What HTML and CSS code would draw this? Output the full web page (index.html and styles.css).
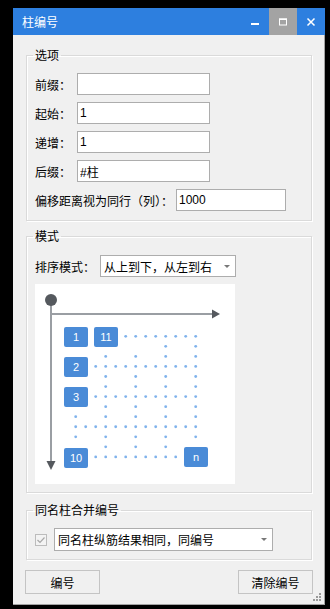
FILE: index.html
```html
<!DOCTYPE html>
<html lang="zh">

<head>
  <meta charset="UTF-8">
  <title>柱编号</title>
  <link rel="stylesheet" href="styles.css">
</head>

<body>
  <div class="window">
    <div class="titlebar">
      <span class="title">柱编号</span>
      <div class="caption-btns">
        <span class="cap-btn">
          <svg width="28" height="27" viewBox="0 0 28 27"><rect x="10" y="15" width="8" height="2" fill="#fff"/></svg>
        </span>
        <span class="cap-btn cap-max">
          <svg width="28" height="27" viewBox="0 0 28 27"><rect x="10.5" y="11" width="7" height="6" fill="none" stroke="#fff" stroke-width="1"/><rect x="10" y="10.5" width="8" height="1.5" fill="#fff"/></svg>
        </span>
        <span class="cap-btn">
          <svg width="28" height="27" viewBox="0 0 28 27"><path d="M10.5 10.5 L17.5 17.5 M17.5 10.5 L10.5 17.5" stroke="#fff" stroke-width="1.5"/></svg>
        </span>
      </div>
    </div>

    <div class="content">
      <fieldset class="group group-options">
        <legend>选项</legend>
        <div class="field">
          <label>前缀：</label>
          <input type="text" class="text-input" value="">
        </div>
        <div class="field">
          <label>起始：</label>
          <input type="text" class="text-input" value="1">
        </div>
        <div class="field">
          <label>递增：</label>
          <input type="text" class="text-input" value="1">
        </div>
        <div class="field">
          <label>后缀：</label>
          <input type="text" class="text-input" value="#柱">
        </div>
        <div class="field field-last">
          <label class="label-wide">偏移距离视为同行（列）：</label>
          <input type="text" class="text-input input-offset" value="1000">
        </div>
      </fieldset>

      <fieldset class="group group-mode">
        <legend>模式</legend>
        <div class="field">
          <label class="label-sort">排序模式：</label>
          <div class="select select-sort">
            <span>从上到下，从左到右</span>
            <span class="arrow"></span>
          </div>
        </div>
        <div class="diagram">
          <svg width="200" height="200" viewBox="0 0 200 200" id="diagramSvg">
            <line x1="16" y1="30" x2="179" y2="30" stroke="#9a9ea3" stroke-width="2"/>
            <polygon points="177,25.5 185,30 177,34.5" fill="#55595e"/>
            <line x1="16" y1="16" x2="16" y2="179" stroke="#9a9ea3" stroke-width="2"/>
            <polygon points="11.5,177 20.5,177 16,186" fill="#55595e"/>
            <circle cx="16" cy="16" r="6" fill="#55595e"/>
            <g id="dots" fill="#80b3ec"></g>
            <g class="cells">
              <rect x="29" y="43" width="24" height="20" rx="2"/>
              <rect x="59" y="43" width="24" height="20" rx="2"/>
              <rect x="29" y="73" width="24" height="20" rx="2"/>
              <rect x="29" y="103" width="24" height="20" rx="2"/>
              <rect x="29" y="164" width="24" height="20" rx="2"/>
              <rect x="149" y="163" width="24" height="20" rx="2"/>
            </g>
            <g class="cell-text">
              <text x="41" y="57">1</text>
              <text x="71" y="57">11</text>
              <text x="41" y="87">2</text>
              <text x="41" y="117">3</text>
              <text x="41" y="178">10</text>
              <text x="161" y="177">n</text>
            </g>
          </svg>
        </div>
      </fieldset>

      <fieldset class="group group-merge">
        <legend>同名柱合并编号</legend>
        <div class="merge-row">
          <span class="checkbox">
            <svg width="10" height="10" viewBox="0 0 10 10"><path d="M1.5 5 L4 7.5 L8.5 2.5" fill="none" stroke="#a8a8a8" stroke-width="1.2"/></svg>
          </span>
          <div class="select select-merge">
            <span>同名柱纵筋结果相同，同编号</span>
            <span class="arrow"></span>
          </div>
        </div>
      </fieldset>

      <div class="buttons">
        <button class="btn">编号</button>
        <button class="btn">清除编号</button>
      </div>
    </div>

    <svg class="grip" width="9" height="9" viewBox="0 0 9 9">
      <rect x="6" y="0" width="2" height="2" fill="#9a9a9a"/>
      <rect x="3" y="3" width="2" height="2" fill="#9a9a9a"/>
      <rect x="6" y="3" width="2" height="2" fill="#9a9a9a"/>
      <rect x="0" y="6" width="2" height="2" fill="#9a9a9a"/>
      <rect x="3" y="6" width="2" height="2" fill="#9a9a9a"/>
      <rect x="6" y="6" width="2" height="2" fill="#9a9a9a"/>
    </svg>
  </div>

  <script>
    // dotted grid behind the numbered cells: [row, list of columns]
    const rows = [
      [0, [5, 6, 7, 8, 9, 10, 11, 12]],
      [1, [9, 12]],
      [2, [3, 6, 9, 12]],
      [3, [2, 3, 4, 5, 6, 7, 8, 9, 10, 11, 12]],
      [4, [3, 6, 9, 12]],
      [5, [3, 6, 9, 12]],
      [6, [2, 3, 4, 5, 6, 7, 8, 9, 10, 11, 12]],
      [7, [3, 6, 9, 12]],
      [8, [0, 3, 6, 9, 12]],
      [9, [0, 1, 2, 3, 4, 5, 6, 7, 8, 9, 10, 11, 12]],
      [10, [0, 3, 6, 9, 12]],
      [11, [3, 6, 9]],
      [12, [2, 3, 4, 5, 6, 7, 8, 9, 10]]
    ];

    const dots = document.getElementById('dots');
    rows.forEach(([r, cols]) => {
      cols.forEach(c => {
        const dot = document.createElementNS('http://www.w3.org/2000/svg', 'circle');
        dot.setAttribute('cx', 40.7 + c * 10);
        dot.setAttribute('cy', 52.3 + r * 10.05);
        dot.setAttribute('r', 1.4);
        dots.appendChild(dot);
      });
    });
  </script>
</body>

</html>
```

FILE: styles.css
```css
body {
  margin: 0;
  background: #000000;
  font-family: "Noto Sans CJK SC", "Liberation Sans", sans-serif;
  font-size: 12px;
  color: #000000;
}

.window {
  position: relative;
  width: 312px;
  height: 597px;
  margin: 8px 0 0 13px;
  box-sizing: border-box;
  background: #f0f0f0;
  border-right: 1px solid #a3a3a3;
  border-bottom: 1px solid #a3a3a3;
}

.titlebar {
  display: flex;
  align-items: center;
  height: 27px;
  background: #2d7fdf;
  margin-right: -1px;
}

.title {
  margin-left: 9px;
  color: #ffffff;
  font-size: 12px;
  line-height: 27px;
}

.caption-btns {
  display: flex;
  margin-left: auto;
}

.cap-btn {
  display: block;
  width: 28px;
  height: 27px;
}

.cap-btn svg {
  display: block;
}

.cap-max {
  background: #a3a3a3;
}

.content {
  padding: 12px 12px 0 13px;
}

.group {
  margin: 0;
  padding: 10px 8px 9px;
  border: 1px solid #dadada;
  box-shadow: inset 1px 1px 0 #ffffff, 1px 1px 0 #ffffff;
  min-width: 0;
}

.group legend {
  margin-left: -2px;
  padding: 0 2px;
  font-size: 12px;
  line-height: 16px;
}

.group-mode {
  margin-top: 7px;
  padding: 11px 8px 8px;
}

.group-merge {
  margin-top: 9px;
  padding: 10px 8px 8px;
}

.field {
  display: flex;
  align-items: center;
  height: 22px;
  margin-bottom: 7px;
}

.field-last {
  margin-bottom: 0;
}

.field label {
  width: 42px;
  flex-shrink: 0;
  white-space: nowrap;
}

.field .label-wide {
  width: 141px;
}

.field .label-sort {
  width: 65px;
}

.text-input {
  width: 133px;
  height: 22px;
  box-sizing: border-box;
  margin: 0;
  padding: 0 2px;
  border: 1px solid #adadad;
  border-radius: 0;
  background: #ffffff;
  font-family: "Liberation Sans", "Noto Sans CJK SC", sans-serif;
  font-size: 12px;
  color: #000000;
  outline: none;
}

.input-offset {
  width: 110px;
}

.select {
  display: flex;
  align-items: center;
  box-sizing: border-box;
  border: 1px solid #adadad;
  background: #ffffff;
  padding-left: 3px;
  white-space: nowrap;
}

.select .arrow {
  margin-left: auto;
  margin-right: 5px;
  width: 0;
  height: 0;
  border-left: 3px solid transparent;
  border-right: 3px solid transparent;
  border-top: 3px solid #787878;
}

.select-sort {
  width: 136px;
  height: 22px;
}

.diagram {
  width: 200px;
  height: 200px;
  margin-top: 7px;
  background: #ffffff;
}

.diagram svg {
  display: block;
}

.cells rect {
  fill: #4a8bd7;
}

.cell-text text {
  fill: #ffffff;
  font-family: "Liberation Sans", sans-serif;
  font-size: 11px;
  text-anchor: middle;
}

.merge-row {
  display: flex;
  align-items: center;
  height: 23px;
}

.checkbox {
  display: flex;
  align-items: center;
  justify-content: center;
  width: 12px;
  height: 12px;
  box-sizing: border-box;
  border: 1px solid #bcbcbc;
  background: #f3f3f3;
}

.select-merge {
  width: 219px;
  height: 23px;
  margin-left: 7px;
}

.buttons {
  display: flex;
  justify-content: space-between;
  margin: 10px -1px 0 -1px;
}

.btn {
  width: 75px;
  height: 24px;
  margin: 0;
  padding: 0;
  border: 1px solid #c4c4c4;
  background: #f0f0f0;
  font-family: "Noto Sans CJK SC", sans-serif;
  font-size: 12px;
  color: #000000;
}

.grip {
  position: absolute;
  right: 2px;
  bottom: 2px;
}
```
